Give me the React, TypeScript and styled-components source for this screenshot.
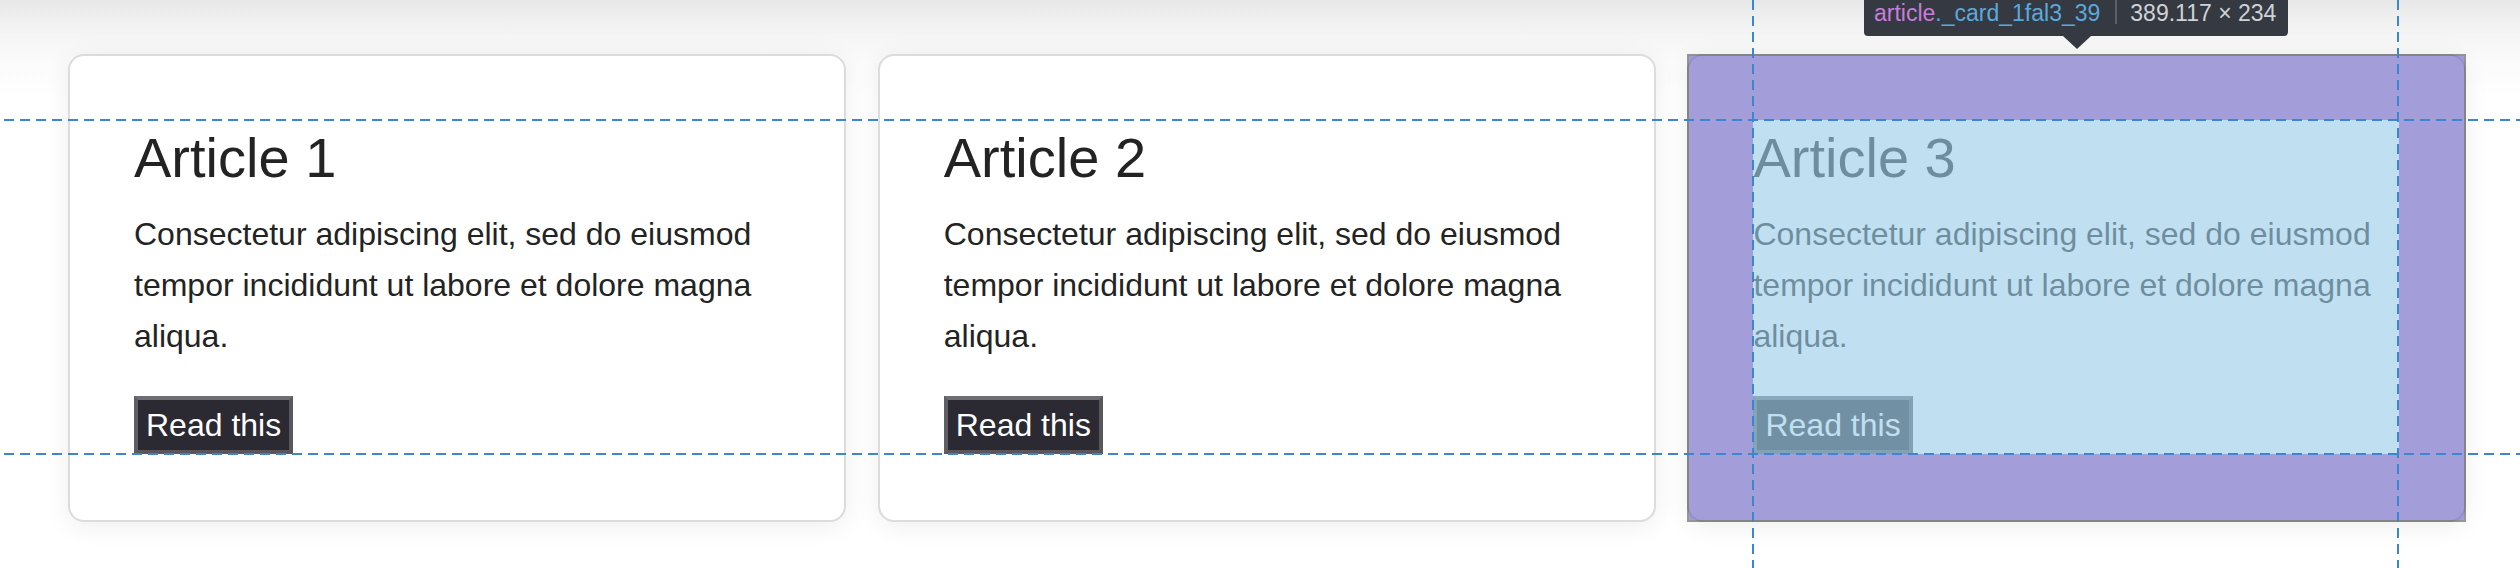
import React from "react";
import styled, { createGlobalStyle } from "styled-components";

const GlobalStyle = createGlobalStyle`
  html, body {
    margin: 0;
    padding: 0;
    background: #ffffff;
  }
  body {
    font-family: "Liberation Sans", Arial, Helvetica, sans-serif;
  }
  *, *::before, *::after {
    box-sizing: border-box;
  }
`;

const Page = styled.div`
  position: relative;
  width: 2520px;
  height: 568px;
  overflow: hidden;
  background: linear-gradient(
    180deg,
    #e7e7e7 0px,
    #efefef 18px,
    #f6f6f6 40px,
    #fbfbfb 62px,
    #ffffff 96px
  );
`;

const CardGrid = styled.main`
  display: grid;
  grid-template-columns: repeat(3, 778.234px);
  column-gap: 31.5px;
  align-items: start;
  padding: 54px 0 0 68px;
`;

const Card = styled.article`
  position: relative;
  display: flex;
  flex-direction: column;
  align-items: flex-start;
  height: 468px;
  padding: 64px 65px 66px 64px;
  background: #ffffff;
  border: 2px solid #dcdcdc;
  border-radius: 16px;
  box-shadow: 0 4px 26px rgba(0, 0, 0, 0.07);
  color: #232323;
`;

const Title = styled.h2`
  margin: 0 0 14px;
  font-size: 56px;
  font-weight: 400;
  line-height: 75px;
`;

const Body = styled.p`
  margin: 0 0 33px;
  font-size: 32px;
  line-height: 51.2px;
`;

const ReadButton = styled.button`
  font-family: inherit;
  font-size: 32px;
  line-height: normal;
  padding: 7px 8px 6px;
  background: #2b2a33;
  color: #ffffff;
  border: 4px solid;
  border-color: #6e6d73 #58585c #58585c #5f5e63;
  border-radius: 0;
  cursor: pointer;
`;

/* ---- devtools highlighter overlay ---- */

const Highlight = styled.div`
  position: absolute;
  inset: -2px;
  border: 2px solid rgba(0, 0, 0, 0.4);
  pointer-events: none;
`;

const PaddingRing = styled.div`
  width: 100%;
  height: 100%;
  border-style: solid;
  border-color: rgba(102, 92, 192, 0.6);
  border-width: 64px 65px 66px 64px;
  background: rgba(155, 204, 231, 0.63);
  background-clip: padding-box;
`;

const Guide = styled.div<{ $axis: "x" | "y"; $at: number }>`
  position: absolute;
  pointer-events: none;
  ${({ $axis, $at }) =>
    $axis === "x"
      ? `
    left: 4px;
    right: 0;
    top: ${$at}px;
    height: 2px;
    background: repeating-linear-gradient(to right, #3a87cf 0 10px, transparent 10px 16px);
  `
      : `
    top: 0;
    bottom: 0;
    left: ${$at}px;
    width: 2px;
    background: repeating-linear-gradient(to bottom, #3a87cf 0 10px, transparent 10px 16px);
  `}
`;

const InfoBar = styled.div`
  position: absolute;
  left: 1864px;
  top: -7px;
  display: flex;
  align-items: stretch;
  padding: 7px 12px 10px 10px;
  background: #353941;
  border-radius: 0 0 4px 4px;
  font-family: "Liberation Sans", Arial, Helvetica, sans-serif;
  font-size: 23px;
  line-height: 26px;
  white-space: nowrap;
  pointer-events: none;

  &::after {
    content: "";
    position: absolute;
    top: 100%;
    left: 199px;
    border-left: 14px solid transparent;
    border-right: 14px solid transparent;
    border-top: 13px solid #353941;
  }
`;

const TagName = styled.span`
  color: #c77ddb;
`;

const ClassName = styled.span`
  color: #5aa9dd;
`;

const Divider = styled.span`
  width: 2px;
  margin: 0 13px 2px 15px;
  background: #5b5f66;
`;

const Dimensions = styled.span`
  color: #cfd2d7;
`;

const articles = [1, 2, 3];

export default function App() {
  return (
    <>
      <GlobalStyle />
      <Page>
        <CardGrid>
          {articles.map((n) => (
            <Card key={n}>
              <Title>Article {n}</Title>
              <Body>
                Consectetur adipiscing elit, sed do eiusmod tempor incididunt ut
                labore et dolore magna aliqua.
              </Body>
              <ReadButton>Read this</ReadButton>
              {n === 3 && (
                <Highlight>
                  <PaddingRing />
                </Highlight>
              )}
            </Card>
          ))}
        </CardGrid>

        <Guide $axis="x" $at={119} />
        <Guide $axis="x" $at={453} />
        <Guide $axis="y" $at={1752} />
        <Guide $axis="y" $at={2397} />

        <InfoBar>
          <TagName>article</TagName>
          <ClassName>._card_1fal3_39</ClassName>
          <Divider />
          <Dimensions>389.117 × 234</Dimensions>
        </InfoBar>
      </Page>
    </>
  );
}
